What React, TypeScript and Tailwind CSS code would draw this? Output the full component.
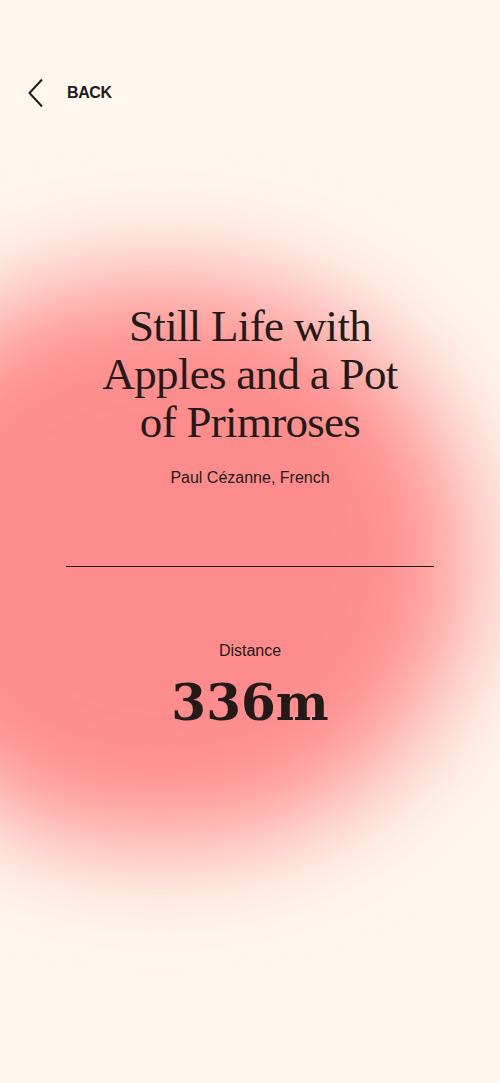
import React from "react";

export default function App() {
  return (
    <div className="relative w-[500px] h-[1083px] overflow-hidden bg-[#fef8ee] text-[#231a1a]">
      <div className="absolute left-[-150px] top-[278px] w-[620px] h-[565px] rounded-full bg-[#ff8c8c] blur-[55px]" />
      <div className="relative flex flex-col">
        <div className="flex items-center gap-[22px] pl-[27px] pt-[78px] h-[108px]">
          <svg width="18" height="30" viewBox="0 0 18 30" fill="none">
            <path d="M15 1.5 L2.5 15 L15 28.5" stroke="#231a1a" strokeWidth="2" />
          </svg>
          <span className="font-['Liberation_Sans',sans-serif] font-bold text-[16px] tracking-[-0.4px]">BACK</span>
        </div>
        <h1 className="mt-[194px] text-center font-['Liberation_Serif',serif] text-[45px] leading-[48px] tracking-[-0.7px]">
          Still Life with
          <br />
          Apples and a Pot
          <br />
          of Primroses
        </h1>
        <p className="mt-[22px] text-center font-['Liberation_Sans',sans-serif] text-[16px] leading-[20px]">
          Paul Cézanne, French
        </p>
        <div className="mx-[66px] mt-[78px] h-px bg-[#231a1a]" />
        <p className="mt-[74px] text-center font-['Liberation_Sans',sans-serif] text-[16px] leading-[20px]">
          Distance
        </p>
        <p className="mt-[12px] text-center font-['DejaVu_Serif',serif] font-bold text-[50px] leading-[60px]">
          336m
        </p>
      </div>
    </div>
  );
}
